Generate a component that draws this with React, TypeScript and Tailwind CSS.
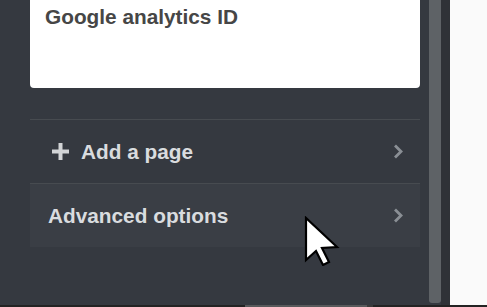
import React from "react";

function Plus() {
  return (
    <svg width="17" height="17" viewBox="0 0 17 17" className="shrink-0">
      <rect x="6.5" y="0" width="4" height="17" fill="#d2d4d6" />
      <rect x="0" y="6.5" width="17" height="4" fill="#d2d4d6" />
    </svg>
  );
}

function Chevron() {
  return (
    <svg width="10" height="15" viewBox="0 0 10 15" className="shrink-0">
      <polyline points="2,1.5 8,7.5 2,13.5" fill="none" stroke="#8a8f95" strokeWidth="2.8" />
    </svg>
  );
}

function Cursor() {
  return (
    <svg
      width="36"
      height="50"
      viewBox="-2 -2 36 50"
      className="absolute left-[304px] top-[216px] pointer-events-none"
    >
      <polygon
        points="0,0 0,42 10,33 17,47 23,44 16,30 31,29"
        fill="#ffffff"
        stroke="#000000"
        strokeWidth="2.2"
        strokeLinejoin="miter"
      />
    </svg>
  );
}

export default function App() {
  return (
    <div
      className="relative w-[487px] h-[307px] overflow-hidden flex flex-col"
      style={{ fontFamily: '"Liberation Sans", Arial, sans-serif' }}
    >
      <div className="flex flex-row h-[305px]">
        <div className="w-[429px] h-full bg-[#353940] pl-[30px] pr-[9px] flex flex-col">
          <div className="h-[88px] bg-white rounded-b-[4px] px-[15px] pt-[5px]">
            <div className="text-[20.8px] leading-[24px] font-bold text-[#464646]">
              Google analytics ID
            </div>
          </div>
          <div className="h-[31px]" />
          <div className="h-px bg-[#474b50]" />
          <div className="h-[63px] flex items-center pl-[22px] pr-[17px]">
            <Plus />
            <span className="ml-[12px] text-[20.8px] font-bold text-[#d9dcdf] leading-[24px]">
              Add a page
            </span>
            <div className="flex-1" />
            <Chevron />
          </div>
          <div className="h-px bg-[#474b50]" />
          <div className="h-[63px] flex items-center bg-[#3a3e45] pl-[18px] pr-[17px]">
            <span className="text-[20.8px] font-bold text-[#d9dcdf] leading-[24px]">
              Advanced options
            </span>
            <div className="flex-1" />
            <Chevron />
          </div>
        </div>
        <div className="w-[12px] h-full bg-[#353940]">
          <div className="w-full h-[303px] bg-[#5e6266] rounded-b-[3px]" />
        </div>
        <div className="w-[9px] h-full bg-[#2f3237]" />
        <div className="flex-1 h-full bg-[#fafafa]" />
      </div>
      <div className="flex flex-row h-[2px] bg-[#232323]">
        <div className="w-[245px]" />
        <div className="w-[122px] bg-[#58595b]" />
        <div className="w-[6px] bg-[#3a3a3a]" />
        <div className="flex-1" />
      </div>
      <Cursor />
    </div>
  );
}
